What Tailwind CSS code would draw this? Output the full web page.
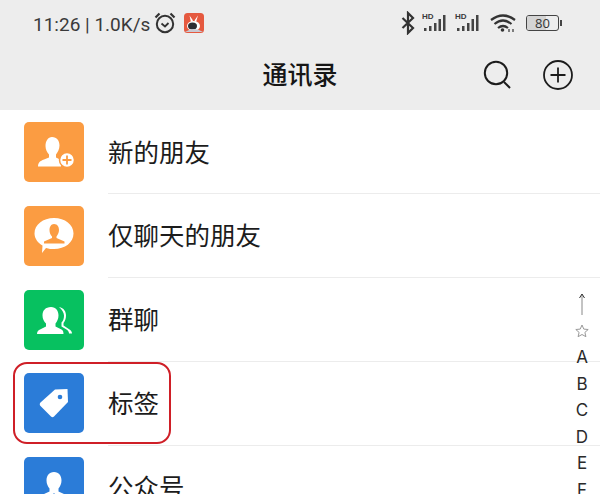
<!DOCTYPE html>
<html lang="zh">
<head>
<meta charset="utf-8">
<script src="https://cdn.jsdelivr.net/npm/@tailwindcss/browser@4"></script>
</head>
<body class="m-0 bg-white">
<div class="relative w-[600px] h-[494px] overflow-hidden bg-white text-[#1c1c1c] font-['Noto_Sans','Noto_Sans_CJK_SC',sans-serif]">
  <header class="h-[110px] bg-[#ededed] flex flex-col">
    <div class="h-[46px] flex items-center pl-[33px] pr-0 text-[#3a3a3a]">
      <span class="text-[19px] leading-none font-['Roboto','Noto_Sans',sans-serif] whitespace-nowrap pt-[2px]">11:26 | 1.0K/s</span>
      <svg class="ml-[3px] w-[24px] h-[24px]" viewBox="0 0 24 24" fill="none" stroke="#333" stroke-width="2"><circle cx="12" cy="13" r="8.2"/><path d="M8.500 12.500l3.500 3 3.500-3.500" stroke-width="1.800"/><path d="M2.500 6.500L6.500 2.500M21.500 6.500L17.500 2.500" stroke-width="2.200"/></svg>
      <svg class="ml-[7px] w-[20px] h-[20px]" viewBox="0 0 20 20"><rect width="20" height="20" rx="3.500" fill="#e5593f"/><path d="M7 9L5.500 2.500L9 7.500M12 9L14 2.500L10.500 7.500" fill="#fff"/><ellipse cx="9.500" cy="13" rx="6.500" ry="5" fill="#fff"/><ellipse cx="8.500" cy="13" rx="4.500" ry="3.500" fill="#2d2d33"/><path d="M1 19q9-6 18 0z" fill="#c9c9d2"/></svg>
      <div class="ml-auto flex items-center">
        <svg class="w-[14px] h-[24px]" viewBox="0 0 14 24" fill="none" stroke="#333" stroke-width="2.200"><path d="M1.500 7L12 17L7 22V2L12 7L1.500 17"/></svg>
        <div class="relative ml-[7px] w-[24px] h-[18px]">
          <span class="absolute left-0 top-[-2px] text-[8px] font-bold leading-[10px] font-['Liberation_Sans',sans-serif]">HD</span>
          <svg class="absolute left-0 top-0 w-[24px] h-[18px]" viewBox="0 0 24 18" fill="#444"><rect x="2" y="14" width="2.500" height="3"/><rect x="7" y="12" width="2.500" height="5"/><rect x="12" y="9" width="2.500" height="8"/><rect x="16.500" y="5" width="2.500" height="12"/><rect x="21" y="1" width="2.500" height="16"/></svg>
        </div>
        <div class="relative ml-[9px] w-[24px] h-[18px]">
          <span class="absolute left-0 top-[-2px] text-[8px] font-bold leading-[10px] font-['Liberation_Sans',sans-serif]">HD</span>
          <svg class="absolute left-0 top-0 w-[24px] h-[18px]" viewBox="0 0 24 18" fill="#444"><rect x="2" y="14" width="2.500" height="3"/><rect x="7" y="12" width="2.500" height="5"/><rect x="12" y="9" width="2.500" height="8"/><rect x="16.500" y="5" width="2.500" height="12"/><rect x="21" y="1" width="2.500" height="16"/></svg>
        </div>
        <svg class="ml-[11px] w-[27px] h-[20px]" viewBox="0 0 27 20" fill="none" stroke="#333" stroke-width="2.200"><path d="M1 7Q13-2 25 7M4.500 11Q13 4 21.500 11M8 15Q13 11 18 15"/><circle cx="12.500" cy="17" r="1.800" fill="#333" stroke="none"/><path d="M19 19v-3M23 19v-3" stroke-width="1.200"/></svg>
        <div class="ml-[9px] mr-[38px] flex items-center">
          <div class="relative w-[33px] h-[16px] rounded-[3px] border-[1.500px] border-[#444] overflow-hidden flex items-center justify-center">
            <div class="absolute left-0 top-0 bottom-0 w-[60%] bg-[#d4d4d4]"></div>
            <span class="relative text-[13px] leading-none text-[#333] font-['Open_Sans',sans-serif]">80</span>
          </div>
          <div class="ml-[1px] w-[2px] h-[6px] bg-[#444]"></div>
        </div>
      </div>
    </div>
    <div class="relative flex-1 flex items-center justify-center pb-[8px]">
      <h1 class="text-[25px] leading-none font-medium text-[#161616] m-0">通讯录</h1>
      <div class="absolute right-[27px] top-[14px] flex items-center gap-[32px]">
        <svg class="w-[28px] h-[30px]" viewBox="0 0 28 30" fill="none" stroke="#1c1c1c" stroke-width="2"><circle cx="13" cy="13" r="11.200"/><path d="M21 22l6 6"/></svg>
        <svg class="w-[30px] h-[30px]" viewBox="0 0 30 30" fill="none" stroke="#1c1c1c" stroke-width="1.800"><circle cx="15" cy="15" r="14"/><path d="M15 7.500v15M7.500 15h15"/></svg>
      </div>
    </div>
  </header>

  <ul class="m-0 p-0 list-none">
    <li class="h-[84px] flex items-center pl-[24px] pt-[6px] pb-[6px]">
      <div class="w-[60px] h-[60px] rounded-[5px] bg-[#fb9c42] shrink-0">
        <svg class="w-[60px] h-[60px]" viewBox="0 0 60 60"><path d="M28 15c5 0 7.500 4 7.500 8.500 0 4-2 7-3.500 9v3l5 2.500v6.500H14c0-4 2-5.500 6-7l5-2v-3c-2-2-3.500-5-3.500-8.500 0-5 2.500-9 6.500-9z" fill="#fff"/><circle cx="43" cy="38" r="7.500" fill="#fff" stroke="#fb9c42" stroke-width="1.500"/><path d="M43 33.500v9M38.500 38h9" stroke="#fb9c42" stroke-width="1.800"/></svg>
      </div>
      <span class="ml-[24px] flex-1 text-[25.500px] leading-none pt-[2px]">新的朋友</span>
    </li>
    <li class="h-[84px] flex items-center pl-[24px] pt-[12px] pb-[12px]">
      <div class="w-[60px] h-[60px] rounded-[5px] bg-[#fb9c42] shrink-0">
        <svg class="w-[60px] h-[60px]" viewBox="0 0 60 60"><path d="M30 12c11 0 19.500 6.500 19.500 15.500S41 43 30 43c-3 0-5 0-8 -1l-4 5 .5-7.500C14 37 10.500 32.500 10.500 27.500 10.500 18.500 19 12 30 12z" fill="#fff"/><path d="M30 18c3.500 0 5 3 5 6s-1.500 5-2.500 6.500v1.500l8 3.500v2H20v-2l8-3.500v-1.500c-1.500-1.500-2.500-3.500-2.500-6.500s1.500-6 4.500-6z" fill="#fb9c42"/></svg>
      </div>
      <span class="ml-[24px] flex-1 text-[25.500px] leading-none">仅聊天的朋友</span>
    </li>
    <li class="h-[84px] flex items-center pl-[24px] pt-[12px] pb-[12px]">
      <div class="w-[60px] h-[60px] rounded-[5px] bg-[#07c160] shrink-0">
        <svg class="w-[60px] h-[60px]" viewBox="0 0 60 60"><path d="M27 17c5 0 7.500 4 7.500 8.500 0 3.500-1.500 6-3 8v3l6 3c1.500.8 2 2.500 2 4.500H13c0-2.500 1-3.500 3-4.500l6-3v-3c-2-2-3.500-4.500-3.500-8 0-5 3-8.500 8.500-8.500z" fill="#fff"/><path d="M35 17c5 1 7 4.500 7 8.500 0 3-1 5.500-2.500 7.500v2.500l6 4c1.500 1 2.500 2 2.500 4h-3c0-2-1-3-2.500-4l-5-3v-4c2-2 2.500-4.500 2.500-7s-2-6-5-8.500z" fill="#fff"/></svg>
      </div>
      <span class="ml-[24px] flex-1 text-[25.500px] leading-none">群聊</span>
    </li>
    <li class="h-[84px] flex items-center pl-[24px] pt-[11px] pb-[13px]">
      <div class="w-[60px] h-[60px] rounded-[5px] bg-[#2b7cd8] shrink-0">
        <svg class="w-[60px] h-[60px]" viewBox="0 0 60 60"><path d="M16.500 29.500L31 16.500l12.500-.5.500 13L30 43.500c-1 1-2 1-3 0l-10.500-10.500c-1-1-1-2.500 0-3.500z" fill="#fff"/><circle cx="36" cy="24" r="2.300" fill="#2b7cd8"/></svg>
      </div>
      <span class="ml-[24px] flex-1 text-[25.500px] leading-none pt-[1px]">标签</span>
    </li>
    <li class="h-[84px] flex items-start pl-[24px] pt-[11px]">
      <div class="w-[60px] h-[60px] rounded-[5px] bg-[#2b7cd8] shrink-0">
        <svg class="w-[60px] h-[60px]" viewBox="0 0 60 60"><path d="M30 15c5 0 7.500 4 7.500 8.500 0 3.500-1.500 6-3 8v3l11 5v6H14.500v-6l11-5v-3c-1.500-2-3-4.500-3-8 0-4.500 2.500-8.500 7.500-8.500z" fill="#fff"/><path d="M30 36l-2.500 3 2.500 7 2.500-7z" fill="#2b7cd8"/></svg>
      </div>
      <span class="ml-[24px] mt-[18px] flex-1 text-[25.500px] leading-none">公众号</span>
    </li>
  </ul>

  <div class="absolute left-[108px] right-0 top-[193px] h-px bg-[#ececec]"></div>
  <div class="absolute left-[108px] right-0 top-[277px] h-px bg-[#ececec]"></div>
  <div class="absolute left-[108px] right-0 top-[361px] h-px bg-[#ececec]"></div>
  <div class="absolute left-[108px] right-0 top-[445px] h-px bg-[#ececec]"></div>

  <div class="absolute left-[13px] top-[362px] w-[158px] h-[82px] rounded-[14px] border-2 border-[#cf1f27]"></div>

  <div class="absolute right-[8px] top-[291px] w-[20px] flex flex-col items-center text-[17px] leading-[26.500px] text-[#2a2a2a] font-['Inter',sans-serif]">
    <svg class="w-[10px] h-[26px]" viewBox="0 0 10 26" fill="none" stroke="#888" stroke-width="1"><path d="M5 3v21"/><path d="M2.500 7L5 3l2.500 4" stroke="#333"/></svg>
    <svg class="w-[14px] h-[14px] mt-[7px] mb-[6px]" viewBox="0 0 14 14" fill="none" stroke="#999" stroke-width="1"><path d="M7 1l1.800 4.100 4.400.4-3.300 2.900 1 4.300L7 10.500 3.100 12.700l1-4.300L.8 5.500l4.400-.4z"/></svg>
    <span>A</span><span>B</span><span>C</span><span>D</span><span>E</span><span>F</span>
  </div>
</div>
</body>
</html>
